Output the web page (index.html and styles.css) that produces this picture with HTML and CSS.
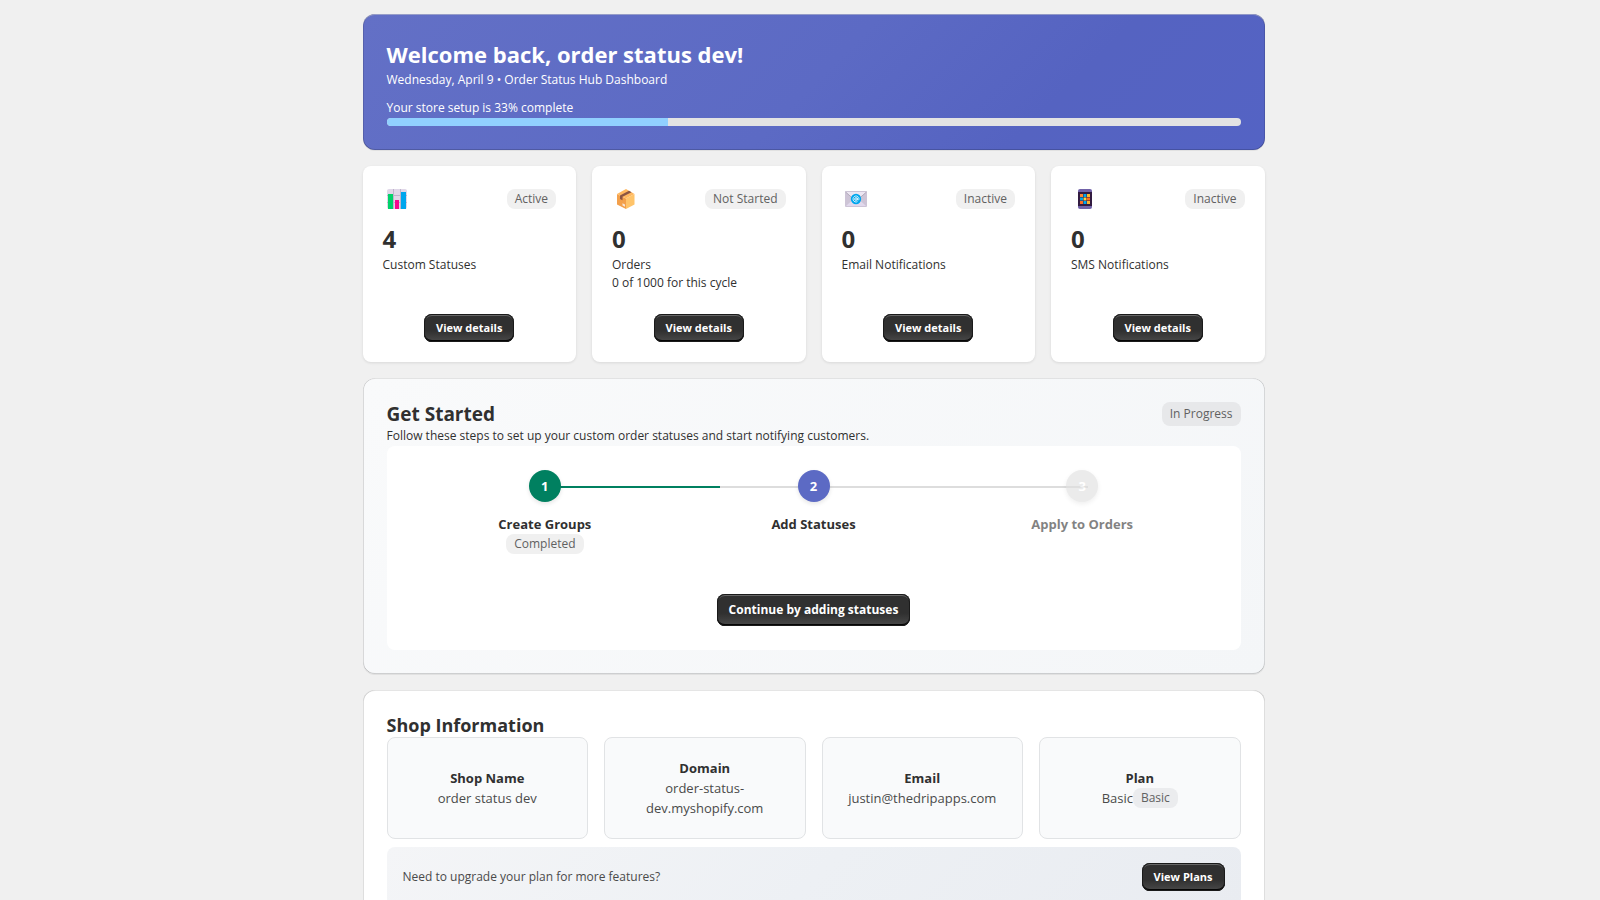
FILE: index.html
```html
<!DOCTYPE html>
<html lang="en">
<head>
    <meta charset="UTF-8">
    <meta name="viewport" content="width=device-width, initial-scale=1.0">
    <title>Order Status Hub Dashboard</title>
    <link rel="stylesheet" href="styles.css">
</head>
<body>
    <main class="page">
        <section class="card banner">
            <h1 class="banner-title">Welcome back, order status dev!</h1>
            <p class="banner-text">Wednesday, April 9 • Order Status Hub Dashboard</p>
            <p class="banner-text banner-setup" id="setup-label">Your store setup is 33% complete</p>
            <div class="progress" role="progressbar" aria-labelledby="setup-label" aria-valuenow="33" aria-valuemin="0" aria-valuemax="100">
                <div class="progress-fill" style="width: 33%"></div>
            </div>
        </section>

        <section class="stats">
            <div class="stat-card">
                <div class="stat-header">
                    <svg class="stat-icon" viewBox="0 0 28 24">
                        <rect x="4" y="2" width="20" height="20" rx="2" fill="#e0d7e8"/>
                        <path d="M4 8.500h20M4 15.500h20M10.500 2v20M17.500 2v20" stroke="#bfb4cc" stroke-width="1"/>
                        <rect x="5" y="7" width="5" height="15" fill="#00d26a"/>
                        <rect x="12" y="13" width="4" height="9" fill="#f70a8d"/>
                        <rect x="18" y="5" width="5" height="17" fill="#00a6ed"/>
                    </svg>
                    <span class="badge">Active</span>
                </div>
                <h2 class="stat-value">4</h2>
                <p class="stat-label">Custom Statuses</p>
                <button class="button">View details</button>
            </div>
            <div class="stat-card">
                <div class="stat-header">
                    <svg class="stat-icon" viewBox="0 0 28 24">
                        <path d="M5 7l9 4.500V22L5 17.500z" fill="#f3a04b"/>
                        <path d="M14 11.500L22.500 7v10.500L14 22z" fill="#ffc46a"/>
                        <path d="M5 7l9-5 8.500 5-8.500 4.500z" fill="#ffb860"/>
                        <path d="M8 8.500l9-4.700 2.500 1.400-9 4.600v3.400L8 12z" fill="#8c5543"/>
                        <path d="M10.500 16.200l2.500 1.200v2.400l-2.500-1.200z" fill="#f4e6dc"/>
                    </svg>
                    <span class="badge">Not Started</span>
                </div>
                <h2 class="stat-value">0</h2>
                <p class="stat-label">Orders</p>
                <p class="stat-note">0 of 1000 for this cycle</p>
                <button class="button">View details</button>
            </div>
            <div class="stat-card">
                <div class="stat-header">
                    <svg class="stat-icon" viewBox="0 0 28 24">
                        <rect x="3" y="4" width="22" height="16" rx="1" fill="#cdc4d6"/>
                        <path d="M4 19l7-6.500h6l7 6.500z" fill="#e1d8ec"/>
                        <path d="M4 5h20l-8 7.500h-4z" fill="#ece6f2"/>
                        <path d="M3.500 5l8 7M24.500 5l-8 7" fill="none" stroke="#b4acbc" stroke-width="1"/>
                        <circle cx="14" cy="12" r="5.200" fill="#00a6ed"/>
                        <circle cx="14" cy="12" r="1.300" fill="none" stroke="#fff" stroke-width="0.900"/>
                        <path d="M15.300 10.700v1.800c0 1 1.700.9 1.700-.6a3 3 0 1 0-1.500 2.700" fill="none" stroke="#fff" stroke-width="0.800"/>
                    </svg>
                    <span class="badge">Inactive</span>
                </div>
                <h2 class="stat-value">0</h2>
                <p class="stat-label">Email Notifications</p>
                <button class="button">View details</button>
            </div>
            <div class="stat-card">
                <div class="stat-header">
                    <svg class="stat-icon" viewBox="0 0 28 24">
                        <rect x="7" y="2" width="14" height="20" rx="2" fill="#7162a8"/>
                        <rect x="7" y="5" width="14" height="14" fill="#321b41"/>
                        <rect x="9" y="7" width="3" height="3" fill="#ff822d"/>
                        <rect x="12.500" y="7" width="3" height="3" fill="#00a6ed"/>
                        <rect x="16" y="7" width="3" height="3" fill="#fcb52d"/>
                        <rect x="9" y="10.500" width="3" height="3" fill="#00a6ed"/>
                        <rect x="12.500" y="10.500" width="3" height="3" fill="#ffd33d"/>
                        <rect x="16" y="10.500" width="3" height="3" fill="#ff6a22"/>
                        <rect x="9" y="14" width="3" height="3" fill="#ff6a22"/>
                        <rect x="12.500" y="14" width="3" height="3" fill="#00a6ed"/>
                        <rect x="16" y="14" width="3" height="3" fill="#fcb52d"/>
                    </svg>
                    <span class="badge">Inactive</span>
                </div>
                <h2 class="stat-value">0</h2>
                <p class="stat-label">SMS Notifications</p>
                <button class="button">View details</button>
            </div>
        </section>

        <section class="card get-started">
            <div class="section-header">
                <h2 class="section-title">Get Started</h2>
                <span class="badge badge-large">In Progress</span>
            </div>
            <p class="section-text">Follow these steps to set up your custom order statuses and start notifying customers.</p>
            <div class="steps-box">
                <div class="steps">
                    <div class="steps-line">
                        <div class="steps-line-fill" style="width: 33%"></div>
                    </div>
                    <div class="step">
                        <span class="step-circle done">1</span>
                        <h3 class="step-label">Create Groups</h3>
                        <span class="badge">Completed</span>
                    </div>
                    <div class="step">
                        <span class="step-circle current">2</span>
                        <h3 class="step-label">Add Statuses</h3>
                    </div>
                    <div class="step pending">
                        <span class="step-circle">3</span>
                        <h3 class="step-label">Apply to Orders</h3>
                    </div>
                </div>
                <button class="button button-large">Continue by adding statuses</button>
            </div>
        </section>

        <section class="card shop">
            <h2 class="shop-title">Shop Information</h2>
            <div class="shop-grid">
                <div class="shop-item">
                    <h3>Shop Name</h3>
                    <p>order status dev</p>
                </div>
                <div class="shop-item">
                    <h3>Domain</h3>
                    <p>order-status-dev.myshopify.com</p>
                </div>
                <div class="shop-item">
                    <h3>Email</h3>
                    <p>justin@thedripapps.com</p>
                </div>
                <div class="shop-item">
                    <h3>Plan</h3>
                    <p class="shop-plan">Basic<span class="badge badge-clear">Basic</span></p>
                </div>
            </div>
            <div class="upgrade">
                <p>Need to upgrade your plan for more features?</p>
                <button class="button">View Plans</button>
            </div>
        </section>
    </main>
</body>
</html>
```

FILE: styles.css
```css
* {
    margin: 0;
    padding: 0;
    box-sizing: border-box;
}

body {
    background-color: #f0f0f0;
    color: #303030;
    font-family: 'Segoe UI', 'Open Sans', 'Noto Sans', sans-serif;
    font-size: 12px;
    line-height: 20px;
    padding: 14px 0 24px 27px;
}

.page {
    display: flex;
    flex-direction: column;
    gap: 16px;
    max-width: 902px;
    margin: 0 auto;
}

.card {
    background-color: #fff;
    border-radius: 12px;
    padding: 24px;
    box-shadow: inset 1px 0 0 rgba(0, 0, 0, 0.13), inset -1px 0 0 rgba(0, 0, 0, 0.13), inset 0 -1px 0 rgba(0, 0, 0, 0.17), inset 0 1px 0 rgba(204, 204, 204, 0.5), 0 1px 0 rgba(26, 26, 26, 0.07);
}

/* Banner */
.banner {
    background: linear-gradient(135deg, #6370c6, #5c6ac4 50%, #5563c1 75%, #5463c4);
    color: #fff;
}

.banner-title {
    font-size: 22px;
    line-height: 32px;
}

.banner-text {
    font-weight: 500;
}

.banner-setup {
    margin-top: 8px;
}

.progress {
    height: 8px;
    background-color: #e3e3e3;
    border-radius: 4px;
    overflow: hidden;
}

.progress-fill {
    height: 100%;
    background-color: #91d0ff;
}

/* Stats */
.stats {
    display: grid;
    grid-template-columns: repeat(4, 1fr);
    gap: 16px;
}

.stat-card {
    display: flex;
    flex-direction: column;
    background-color: #fff;
    border-radius: 8px;
    padding: 20px;
    box-shadow: 0 1px 3px rgba(0, 0, 0, 0.1);
}

.stat-header {
    display: flex;
    justify-content: space-between;
    align-items: center;
    min-height: 25px;
    margin-bottom: 12px;
}

.stat-icon {
    width: 28px;
    height: 24px;
}

.stat-value {
    font-size: 24px;
    line-height: 32px;
}

.stat-note {
    line-height: 16px;
    margin-bottom: 23px;
}

.stat-card .button {
    align-self: center;
    margin-top: auto;
}

.badge {
    background-color: #f0f0f0;
    color: #616161;
    border-radius: 8px;
    padding: 0 8px;
    font-size: 12px;
    line-height: 20px;
}

.badge-large {
    background-color: #e7e8ea;
    line-height: 24px;
}

.badge-clear {
    background-color: #ebecee;
}

.button {
    background: linear-gradient(180deg, #303030 60%, #4a4a4a);
    color: #fff;
    border: none;
    border-radius: 8px;
    padding: 4px 12px;
    font-family: inherit;
    font-size: 11px;
    font-weight: bold;
    line-height: 20px;
    cursor: pointer;
    box-shadow: inset 0 0 0 1px #1a1a1a, inset 0 -2px 0 #050505, inset 0 2px 0 #666;
}

.button:hover {
    background: #1a1a1a;
}

.button-large {
    font-size: 12px;
    padding: 6px 12px;
}

/* Get started */
.get-started {
    background-image: linear-gradient(135deg, #f9fafb, #f4f6f8);
}

.section-header {
    display: flex;
    justify-content: space-between;
}

.section-title {
    font-size: 19px;
    line-height: 24px;
}

.steps-box {
    display: flex;
    flex-direction: column;
    align-items: center;
    gap: 40px;
    background-color: #fff;
    border-radius: 8px;
    padding: 24px;
}

.steps {
    position: relative;
    display: flex;
    width: 100%;
}

.steps-line {
    position: absolute;
    top: 16px;
    left: 16%;
    right: 16%;
    height: 2px;
    background-color: #ddd;
}

.steps-line-fill {
    height: 100%;
    background-color: #008060;
}

.step {
    position: relative;
    flex: 1;
    display: flex;
    flex-direction: column;
    align-items: center;
}

.step-circle {
    width: 32px;
    height: 32px;
    margin-bottom: 12px;
    border-radius: 50%;
    background-color: #dfdfdf;
    color: #fff;
    font-size: 13px;
    font-weight: bold;
    line-height: 32px;
    text-align: center;
    box-shadow: 0 2px 4px rgba(0, 0, 0, 0.1);
}

.step-circle.done {
    background-color: #008060;
}

.step-circle.current {
    background-color: #5c6ac4;
}

.step-label {
    font-size: 13px;
}

.step.pending {
    opacity: 0.6;
}

/* Shop information */
.shop-title {
    font-size: 18px;
    line-height: 23px;
}

.shop-grid {
    display: grid;
    grid-template-columns: repeat(4, 1fr);
    gap: 16px;
}

.shop-item {
    display: flex;
    flex-direction: column;
    justify-content: center;
    background-color: #f9fafb;
    border: 1px solid #e1e3e5;
    border-radius: 8px;
    padding: 20px;
    font-size: 13px;
    text-align: center;
}

.shop-item h3 {
    font-size: 13px;
}

.shop-item p {
    color: #4a4a4a;
}

.shop-plan {
    display: flex;
    justify-content: center;
}

.upgrade {
    display: flex;
    justify-content: space-between;
    align-items: center;
    margin-top: 8px;
    padding: 16px;
    border-radius: 8px;
    background: linear-gradient(135deg, #f4f5f7, #edf0f4 50%, #e9ecf1);
    color: #4a4a4a;
}

@media (max-width: 768px) {
    body {
        padding: 14px;
    }

    .stats,
    .shop-grid {
        grid-template-columns: repeat(2, 1fr);
    }
}
```
